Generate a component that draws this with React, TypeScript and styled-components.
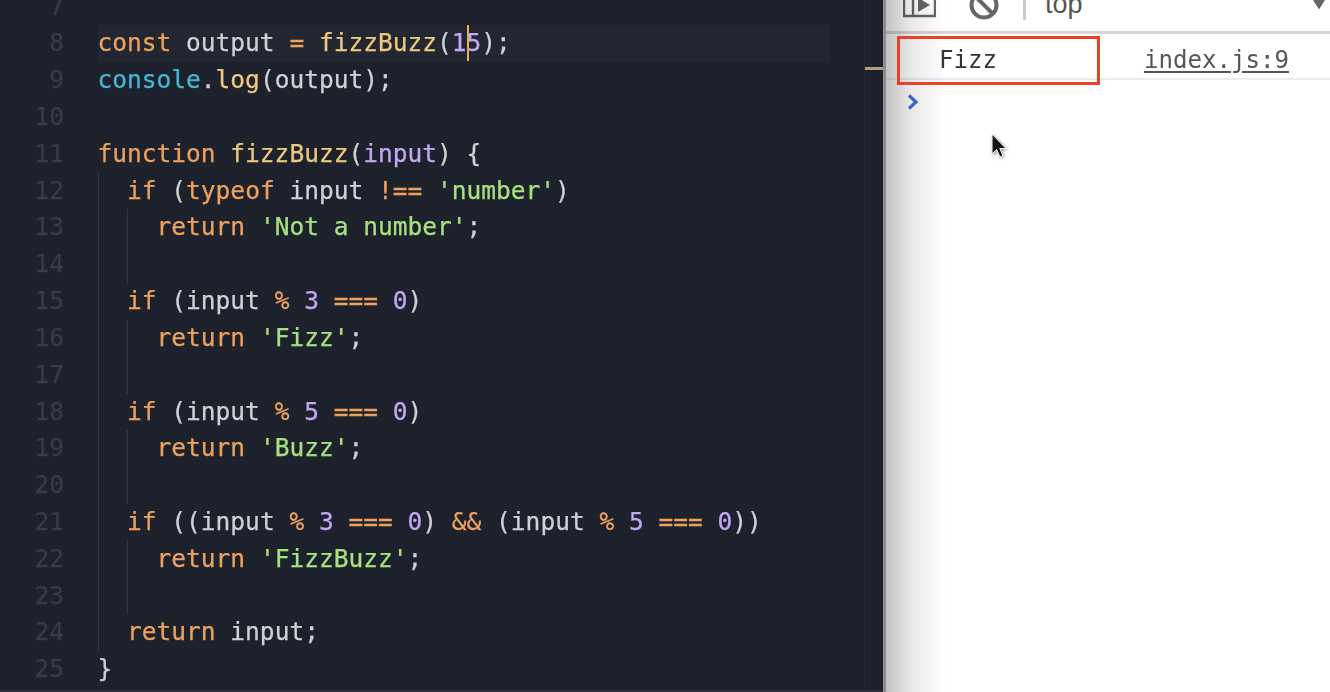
import styled, { createGlobalStyle } from 'styled-components'

const GlobalStyle = createGlobalStyle`
  html, body {
    margin: 0;
    padding: 0;
    background: #1d212b;
  }
`

const colors = {
  kw: '#eca25e',
  fn: '#eec87f',
  obj: '#46b7d5',
  plain: '#cfd1d5',
  param: '#c4a6f3',
  num: '#c4a6f3',
  str: '#a6e07f',
}

type Kind = keyof typeof colors

const Page = styled.div`
  display: flex;
  width: 1330px;
  height: 692px;
  overflow: hidden;
`

const Editor = styled.div`
  flex: 0 0 883px;
  display: flex;
  height: 692px;
  box-sizing: border-box;
  overflow: hidden;
  background: #1d212b;
  border-bottom: 2px solid #2b2f3a;
`

const Lines = styled.div`
  flex: 1;
  margin-top: -11.4px;
  font-family: 'DejaVu Sans Mono', 'Liberation Mono', monospace;
  font-size: 24.53px;
  -webkit-text-stroke: 0.25px;
  filter: blur(0.35px);
`

const Line = styled.div`
  display: flex;
  height: 36.82px;
  line-height: 36.82px;
`

const LineNumber = styled.div`
  flex: 0 0 64px;
  margin-right: 33.5px;
  text-align: right;
  color: #363b47;
`

const Code = styled.div<{ $active?: boolean }>`
  position: relative;
  display: flex;
  flex: 0 0 732px;
  white-space: pre;
  background: ${(p) => (p.$active ? '#222630' : 'transparent')};
`

const Guide = styled.span`
  flex: 0 0 auto;
  box-sizing: border-box;
  width: 29.54px;
  border-left: 1px solid #323743;
`

const Token = styled.span<{ $kind: Kind }>`
  color: ${(p) => colors[p.$kind]};
`

const CaretAnchor = styled.span`
  position: relative;
  display: inline-block;
  width: 0;
`

const Caret = styled.span`
  position: absolute;
  left: 0;
  top: 0;
  width: 2.5px;
  height: 36px;
  background: #e8b04f;
`

const OverviewRuler = styled.div`
  flex: 0 0 19px;
  box-sizing: border-box;
  padding-top: 67px;
  border-left: 1px solid #262b36;
`

const RulerMark = styled.div`
  height: 3px;
  background: #b59f7a;
`

const Divider = styled.div`
  flex: 0 0 3px;
  background: #8d8e90;
`

const ConsolePane = styled.div`
  position: relative;
  flex: 1;
  background: #fff;
  overflow: hidden;
`

const SideShade = styled.div`
  position: absolute;
  left: 0;
  top: 0;
  bottom: 0;
  width: 60px;
  background: linear-gradient(to right, rgba(0, 0, 0, 0.24), rgba(0, 0, 0, 0.09) 40%, rgba(0, 0, 0, 0));
  pointer-events: none;
`

const Toolbar = styled.div`
  display: flex;
  align-items: flex-start;
  height: 31px;
  padding-left: 17px;
  border-bottom: 3px solid #d6d6d6;
  overflow: hidden;
`

const ToolIcon = styled.svg<{ $gap?: number }>`
  flex: 0 0 auto;
  margin-left: ${(p) => p.$gap ?? 0}px;
  display: block;
`

const ToolSeparator = styled.div`
  flex: 0 0 3px;
  height: 20px;
  margin-left: 24px;
  background: #cbcbcb;
`

const ContextLabel = styled.div`
  margin: -11px 0 0 19px;
  font-family: 'Liberation Sans', Arial, sans-serif;
  font-size: 27px;
  line-height: 30px;
  color: #555;
`

const ContextCaret = styled.svg`
  display: block;
  margin-left: auto;
  margin-right: 5px;
`

const LogRow = styled.div`
  display: flex;
  align-items: center;
  box-sizing: border-box;
  height: 46px;
  padding: 7px 41px 0 53px;
  border-bottom: 2px solid #ececec;
  font-family: 'DejaVu Sans Mono', 'Liberation Mono', monospace;
  font-size: 24.1px;
  filter: blur(0.3px);
`

const LogText = styled.span`
  color: #30333a;
`

const SourceLink = styled.span`
  margin-left: auto;
  color: #555;
  text-decoration: underline;
  text-underline-offset: 3px;
`

const PromptRow = styled.div`
  padding: 14px 0 0 21px;
`

const HighlightBox = styled.div`
  position: absolute;
  left: 11px;
  top: 36px;
  width: 203px;
  height: 49px;
  box-sizing: border-box;
  border: 3px solid #e8432a;
`

const MousePointer = styled.svg`
  position: absolute;
  left: 104px;
  top: 133px;
  filter: drop-shadow(1px 1px 1.5px rgba(0, 0, 0, 0.45));
`

type Segment = [Kind, string]

const t = (kind: Kind, text: string): Segment => [kind, text]

const source: { num: number; guides: number; code: Segment[] }[] = [
  { num: 7, guides: 0, code: [] },
  {
    num: 8,
    guides: 0,
    code: [
      t('kw', 'const'),
      t('plain', ' output '),
      t('kw', '='),
      t('plain', ' '),
      t('fn', 'fizzBuzz'),
      t('plain', '('),
    ],
  },
  {
    num: 9,
    guides: 0,
    code: [t('obj', 'console'), t('plain', '.'), t('fn', 'log'), t('plain', '(output);')],
  },
  { num: 10, guides: 0, code: [] },
  {
    num: 11,
    guides: 0,
    code: [
      t('kw', 'function'),
      t('plain', ' '),
      t('fn', 'fizzBuzz'),
      t('plain', '('),
      t('param', 'input'),
      t('plain', ') {'),
    ],
  },
  {
    num: 12,
    guides: 1,
    code: [
      t('kw', 'if'),
      t('plain', ' ('),
      t('kw', 'typeof'),
      t('plain', ' input '),
      t('kw', '!=='),
      t('plain', ' '),
      t('str', "'number'"),
      t('plain', ')'),
    ],
  },
  { num: 13, guides: 2, code: [t('kw', 'return'), t('plain', ' '), t('str', "'Not a number'"), t('plain', ';')] },
  { num: 14, guides: 2, code: [] },
  {
    num: 15,
    guides: 1,
    code: [
      t('kw', 'if'),
      t('plain', ' (input '),
      t('kw', '%'),
      t('plain', ' '),
      t('num', '3'),
      t('plain', ' '),
      t('kw', '==='),
      t('plain', ' '),
      t('num', '0'),
      t('plain', ')'),
    ],
  },
  { num: 16, guides: 2, code: [t('kw', 'return'), t('plain', ' '), t('str', "'Fizz'"), t('plain', ';')] },
  { num: 17, guides: 2, code: [] },
  {
    num: 18,
    guides: 1,
    code: [
      t('kw', 'if'),
      t('plain', ' (input '),
      t('kw', '%'),
      t('plain', ' '),
      t('num', '5'),
      t('plain', ' '),
      t('kw', '==='),
      t('plain', ' '),
      t('num', '0'),
      t('plain', ')'),
    ],
  },
  { num: 19, guides: 2, code: [t('kw', 'return'), t('plain', ' '), t('str', "'Buzz'"), t('plain', ';')] },
  { num: 20, guides: 2, code: [] },
  {
    num: 21,
    guides: 1,
    code: [
      t('kw', 'if'),
      t('plain', ' ((input '),
      t('kw', '%'),
      t('plain', ' '),
      t('num', '3'),
      t('plain', ' '),
      t('kw', '==='),
      t('plain', ' '),
      t('num', '0'),
      t('plain', ') '),
      t('kw', '&&'),
      t('plain', ' (input '),
      t('kw', '%'),
      t('plain', ' '),
      t('num', '5'),
      t('plain', ' '),
      t('kw', '==='),
      t('plain', ' '),
      t('num', '0'),
      t('plain', '))'),
    ],
  },
  { num: 22, guides: 2, code: [t('kw', 'return'), t('plain', ' '), t('str', "'FizzBuzz'"), t('plain', ';')] },
  { num: 23, guides: 2, code: [] },
  { num: 24, guides: 1, code: [t('kw', 'return'), t('plain', ' input;')] },
  { num: 25, guides: 0, code: [t('plain', '}')] },
]

export default function App() {
  return (
    <>
      <GlobalStyle />
      <Page>
        <Editor>
          <Lines>
            {source.map((line) => (
              <Line key={line.num}>
                <LineNumber>{line.num}</LineNumber>
                <Code $active={line.num === 8}>
                  {Array.from({ length: line.guides }).map((_, i) => (
                    <Guide key={i} />
                  ))}
                  {line.code.map(([kind, text], i) => (
                    <Token key={i} $kind={kind}>
                      {text}
                    </Token>
                  ))}
                  {line.num === 8 && (
                    <>
                      <Token $kind="num">1</Token>
                      <CaretAnchor>
                        <Caret />
                      </CaretAnchor>
                      <Token $kind="num">5</Token>
                      <Token $kind="plain">);</Token>
                    </>
                  )}
                </Code>
              </Line>
            ))}
          </Lines>
          <OverviewRuler>
            <RulerMark />
          </OverviewRuler>
        </Editor>
        <Divider />
        <ConsolePane>
          <Toolbar>
            <ToolIcon width="33" height="18" viewBox="0 0 33 18" fill="none">
              <path d="M1 -4V16H32V-4M10 -4V16" stroke="#666" strokeWidth="2.4" />
              <path d="M15 -2H15.5L27 5L15 12Z" fill="#666" />
            </ToolIcon>
            <ToolIcon $gap={33} width="30" height="20" viewBox="0 0 30 20" fill="none">
              <circle cx="15" cy="5" r="12.5" stroke="#666" strokeWidth="4" />
              <path d="M6 -4L24 14" stroke="#666" strokeWidth="4" />
            </ToolIcon>
            <ToolSeparator />
            <ContextLabel>top</ContextLabel>
            <ContextCaret width="12" height="10" viewBox="0 0 12 10">
              <path d="M0 0H12L6 9.5Z" fill="#666" />
            </ContextCaret>
          </Toolbar>
          <LogRow>
            <LogText>Fizz</LogText>
            <SourceLink>index.js:9</SourceLink>
          </LogRow>
          <PromptRow>
            <ToolIcon width="12" height="16" viewBox="0 0 12 16" fill="none">
              <path d="M2 1.5L9 8L2 14.5" stroke="#3f6fd1" strokeWidth="3.2" />
            </ToolIcon>
          </PromptRow>
          <SideShade />
          <HighlightBox />
          <MousePointer width="18" height="26" viewBox="0 0 18 26">
            <path d="M2 1V21L6.6 16.6L10 24L13 22.6L9.8 15.6H16Z" fill="#111" stroke="#fff" strokeWidth="1" />
          </MousePointer>
        </ConsolePane>
      </Page>
    </>
  )
}
